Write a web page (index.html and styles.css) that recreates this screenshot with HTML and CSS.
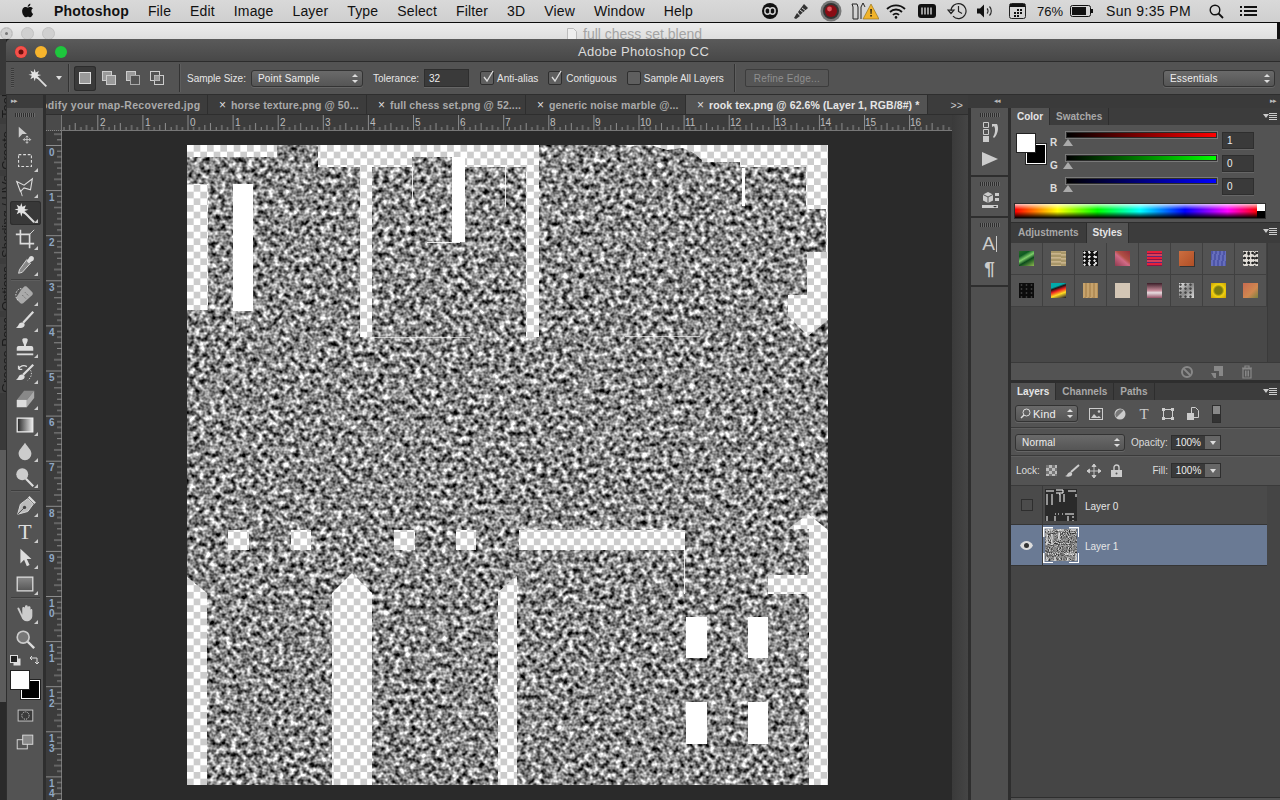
FILE: index.html
```html
<!DOCTYPE html>
<html lang="en">
<head>
<meta charset="utf-8">
<title>Adobe Photoshop CC</title>
<link rel="stylesheet" href="styles.css">
</head>
<body>
<header class="menubar">
  <svg class="apple" viewBox="0 0 14 16"><path d="M11.2 8.5c0-1.9 1.6-2.8 1.6-2.8-.9-1.3-2.2-1.5-2.7-1.5-1.2-.1-2.2.7-2.8.7-.6 0-1.5-.7-2.4-.7-1.3 0-2.4.7-3.1 1.8C.5 8.2 1.4 11.6 2.8 13.4c.6.9 1.3 1.9 2.3 1.9.9 0 1.3-.6 2.4-.6s1.4.6 2.4.6 1.6-.9 2.2-1.8c.7-1 1-2 1-2-.1 0-1.9-.7-1.9-3zM9.4 3c.5-.6.8-1.4.7-2.3-.7 0-1.6.5-2.1 1.1-.5.5-.9 1.4-.8 2.2.8.1 1.7-.4 2.2-1z"/></svg>
  <nav class="menus">
    <span class="app">Photoshop</span><span>File</span><span>Edit</span><span>Image</span><span>Layer</span><span>Type</span><span>Select</span><span>Filter</span><span>3D</span><span>View</span><span>Window</span><span>Help</span>
  </nav>
  <div class="status">
    <svg class="st" width="22" height="16" viewBox="0 0 22 16"><circle cx="11" cy="8" r="8" /><path d="M6 8a2.6 2.6 0 1 1 5 0a2.6 2.6 0 1 0 5 0a2.6 2.6 0 1 0-5 0a2.6 2.6 0 1 1-5 0" fill="none" stroke="#d2d2d2" stroke-width="1.6"/></svg>
    <svg class="st mg10" width="20" height="18" viewBox="0 0 20 18"><path d="M3 16l3-5 3 3-4 3zM7 10l6-8 4 4-8 7z" fill="#333"/><path d="M9 8l5 4M11 6l4 3" stroke="#d2d2d2" stroke-width="1"/></svg>
    <svg class="st mg9" width="22" height="22" viewBox="0 0 22 22"><circle cx="11" cy="11" r="10.5" fill="#777"/><circle cx="11" cy="11" r="8" fill="#333"/><circle cx="11" cy="11" r="6" fill="#8a0c14"/><circle cx="9.5" cy="9" r="2.4" fill="#e0555c"/></svg>
    <svg class="st mg9" width="28" height="20" viewBox="0 0 28 20"><path d="M1 3h5l1 3v12H2V6zM10 18V6l2-4 2 4" fill="none" stroke="#222" stroke-width="1"/><path d="M20 3l8 15H12z" fill="#f0b32b" stroke="#8a6a10" stroke-width=".6"/><path d="M19.3 8h1.5l-.3 5h-.9zM19.3 14h1.5v1.5h-1.5z" fill="#111"/></svg>
    <svg class="st mg7" width="20" height="15" viewBox="0 0 20 15"><path d="M1 5a13 13 0 0 1 18 0M4 8a8.5 8.5 0 0 1 12 0M7 11a4 4 0 0 1 6 0" fill="none" stroke="#111" stroke-width="1.8"/><circle cx="10" cy="13.4" r="1.3"/></svg>
    <svg class="st mg12" width="18" height="14" viewBox="0 0 18 14"><rect width="18" height="14" rx="3"/><path d="M4 3.5v7M7 3.5v7M10 3.5v7M13 3.5v7" stroke="#d2d2d2" stroke-width="1.4"/></svg>
    <svg class="st mg11" width="20" height="18" viewBox="0 0 20 18"><path d="M4 9a7.5 7.5 0 1 1 2 5.2" fill="none" stroke="#222" stroke-width="1.2"/><path d="M1 8h6l-3 3.5zM11.500 4v5.500l3.500 2" fill="none" stroke="#222" stroke-width="1.200"/></svg>
    <svg class="st mg10" width="17" height="14" viewBox="0 0 17 14"><path d="M0 4.500h3l4-4v13l-4-4H0z"/><path d="M10 4.500a3.500 3.500 0 0 1 0 5M12.500 2.500a6.500 6.500 0 0 1 0 9" fill="none" stroke="#222" stroke-width="1.100"/></svg>
    <svg class="st mg15" width="17" height="16" viewBox="0 0 17 16"><rect x=".5" y=".5" width="16" height="15" rx="2" fill="none" stroke="#222"/><rect x="1" y="1" width="15" height="3"/><path d="M8 6h2v2H8zM11 6h2v2h-2zM8 9h2v2H8zM11 9h2v2h-2zM5 9h2v2H5zM8 12h2v2H8zM5 12h2v2H5z"/></svg>
    <span class="pct">76%</span>
    <svg class="st batt" width="23" height="12" viewBox="0 0 23 12"><rect x=".5" y=".5" width="20" height="11" rx="2" fill="none" stroke="#111"/><rect x="2" y="2" width="14" height="8"/><rect x="21" y="4" width="2" height="4"/></svg>
    <span class="clock">Sun 9:35 PM</span>
    <svg class="st srch" width="15" height="15" viewBox="0 0 15 15"><circle cx="6" cy="6" r="4.8" fill="none" stroke="#111" stroke-width="1.400"/><path d="M9.500 9.500L14 14" stroke="#111" stroke-width="1.800"/></svg>
    <svg class="st last" width="17" height="12" viewBox="0 0 17 12"><path d="M0 1h2v2H0zM0 5h2v2H0zM0 9h2v2H0zM4 1h13v2H4zM4 5h13v2H4zM4 9h13v2H4z"/></svg>
  </div>
</header>

<div class="backbar">
  <span class="bdot first"></span><span class="bdot"></span><span class="bdot"></span>
  <span class="btitle"><svg width="10" height="13" viewBox="0 0 10 13"><path d="M.5.500h6l3 3v9h-9z" fill="#eee" stroke="#bbb"/></svg> full chess set.blend</span>
</div>

<div class="desk">
  <aside class="blender">
    <div class="bl-top"></div>
    <div class="bl-tab bl-tools">Tools</div>
    <div class="bl-tab bl-create">Create</div>
    <div class="bl-tab bl-shading">Shading / UVs</div>
    <div class="bl-tab bl-options">Options</div>
    <div class="bl-tab bl-grease">Grease Pencil</div>
    <div class="bl-rest"></div>
  </aside>

  <main class="pswin">
    <div class="titlebar">
      <span class="light red"></span><span class="light yellow"></span><span class="light green"></span>
      <span class="wintitle">Adobe Photoshop CC</span>
    </div>

    <div class="options">
      <span class="grip"></span>
      <svg class="opt-wand" width="20" height="20" viewBox="0 0 24 24"><use href="#i-wand"/></svg>
      <span class="caret"></span>
      <span class="vsep"></span>
      <span class="modes">
        <span class="mode on"><svg width="14" height="14" viewBox="0 0 14 14"><rect x="1.500" y="1.500" width="11" height="11" fill="#999" stroke="#ddd"/></svg></span>
        <span class="mode"><svg width="14" height="14" viewBox="0 0 14 14"><rect x=".5" y=".5" width="9" height="9" fill="#999" stroke="#ccc"/><rect x="4.500" y="4.500" width="9" height="9" fill="#999" stroke="#ccc"/></svg></span>
        <span class="mode"><svg width="14" height="14" viewBox="0 0 14 14"><rect x=".5" y=".5" width="9" height="9" fill="#999" stroke="#ccc"/><rect x="4.500" y="4.500" width="9" height="9" fill="#535353" stroke="#aaa"/></svg></span>
        <span class="mode"><svg width="14" height="14" viewBox="0 0 14 14"><rect x=".5" y=".5" width="9" height="9" fill="none" stroke="#ccc"/><rect x="4.500" y="4.500" width="9" height="9" fill="none" stroke="#ccc"/><rect x="4.500" y="4.500" width="5" height="5" fill="#999"/></svg></span>
      </span>
      <span class="vsep second"></span>
      <span class="lbl sample-lbl">Sample Size:</span>
      <span class="select sample-sel">Point Sample<span class="updown"></span></span>
      <span class="lbl tol-lbl">Tolerance:</span>
      <span class="input tol-in">32</span>
      <span class="check aa"><svg width="14" height="14" viewBox="0 0 14 14"><path d="M3 7l3 4 6-10" fill="none" stroke="#ddd" stroke-width="1.300"/></svg></span><span class="lbl">Anti-alias</span>
      <span class="check cg"><svg width="14" height="14" viewBox="0 0 14 14"><path d="M3 7l3 4 6-10" fill="none" stroke="#ddd" stroke-width="1.300"/></svg></span><span class="lbl">Contiguous</span>
      <span class="check sl"></span><span class="lbl">Sample All Layers</span>
      <span class="vsep third"></span>
      <span class="btn-dis">Refine Edge...</span>
      <span class="select workspace">Essentials<span class="updown"></span></span>
    </div>

    <div class="work">
      <aside class="tools">
        <div class="tools-head"><span class="tw">▸▸</span></div>
        <div class="grip-h"></div>
        <div class="tool f"><svg viewBox="0 0 24 24"><path d="M3 3l9 8H8l-1 0-4 4z" fill="#ccc"/><path d="M12 13v8M8 17h8M12 13l-1.500 1.500M12 13l1.500 1.500M12 21l-1.500-1.500M12 21l1.500-1.500M8 17l1.500-1.500M8 17l1.500 1.500M16 17l-1.500-1.500M16 17l-1.500 1.500" stroke="#ccc" fill="none"/></svg></div>
        <div class="tool m"><svg viewBox="0 0 24 24"><rect x="5" y="5" width="14" height="13" fill="none" stroke="#ddd" stroke-width="1.200" stroke-dasharray="3 2"/></svg></div>
        <div class="tool m"><svg viewBox="0 0 24 24"><path d="M3 6l8 4 9-7-2 12-7-2-4 4z" fill="none" stroke="#ddd" stroke-width="1.200"/><path d="M7 15l2 7" stroke="#ddd"/></svg></div>
        <div class="tool m on"><svg viewBox="0 0 24 24"><use href="#i-wand"/></svg></div>
        <div class="tool m"><svg viewBox="0 0 24 24"><path d="M7 2v15h15M2 7h15v15" fill="none" stroke="#ddd" stroke-width="1.800"/><path d="M17 7l5-5" stroke="#ddd"/></svg></div>
        <div class="tool m"><svg viewBox="0 0 24 24"><path d="M14 6l4 4-9 10-4 1 1-4z" fill="#888" stroke="#ddd"/><path d="M14 8l3-5c1-1 3-1 4 0s1 3 0 4l-5 3z" fill="#ddd"/></svg></div>
        <div class="sep sep-a"></div>
        <div class="tool m"><svg viewBox="0 0 24 24"><path d="M8 6l3-3c1-.7 2-.7 3 0l6 6c.7 1 .7 2 0 3L10 21c-1 .7-2 .7-3 0l-4-4c-.7-1-.7-2 0-3z" fill="#aaa"/><path d="M8 5C4 5 2 9 2 12s1 5 3 6" fill="none" stroke="#ddd" stroke-dasharray="1.500 1.500"/><path d="M9 12l4 4M12 9l4 4" stroke="#666" stroke-dasharray="1.500 1"/></svg></div>
        <div class="tool m"><svg viewBox="0 0 24 24"><path d="M21 2L10 14" stroke="#ddd" stroke-width="2.400"/><path d="M10 14c-2-1-4 0-5 2-1 2-2 3-3 3 3 1 7 1 9-1 1-1 1-3-1-4z" fill="#ddd"/></svg></div>
        <div class="tool m"><svg viewBox="0 0 24 24"><path d="M9 4c0-2 6-2 6 0 0 3-2 4-2 7h6c1 0 2 1 2 2v3H3v-3c0-1 1-2 2-2h6c0-3-2-4-2-7z" fill="#ddd"/><path d="M3 20h18" stroke="#ddd" stroke-width="2"/></svg></div>
        <div class="tool m"><svg viewBox="0 0 24 24"><path d="M21 3L10 14" stroke="#ddd" stroke-width="2.400"/><path d="M10 14c-2-1-4 0-5 2-1 2-2 3-3 3 3 1 7 1 9-1 1-1 1-3-1-4z" fill="#ddd"/><path d="M5 8a6 6 0 0 1 9-3M5 8V4M5 8h4" fill="none" stroke="#ddd" stroke-width="1.500"/><path d="M18 9c2 3 1 8-3 11" fill="none" stroke="#ddd" stroke-dasharray="1.500 1.500"/></svg></div>
        <div class="tool m"><svg viewBox="0 0 24 24"><path d="M11 3h11l-8 10H3z" fill="#888"/><path d="M3 13h11v8H3z" fill="#ddd"/><path d="M14 13l8-10v8l-8 10z" fill="#aaa"/></svg></div>
        <div class="tool m"><svg viewBox="0 0 24 24"><defs><linearGradient id="gt"><stop offset="0" stop-color="#222"/><stop offset="1" stop-color="#eee"/></linearGradient></defs><rect x="3.500" y="4.500" width="17" height="15" fill="url(#gt)" stroke="#eee" stroke-width="1.400"/></svg></div>
        <div class="tool m"><svg viewBox="0 0 24 24"><path d="M12 3c4 6 7 8 7 12a7 7 0 0 1-14 0c0-4 3-6 7-12z" fill="#ccc"/></svg></div>
        <div class="tool m"><svg viewBox="0 0 24 24"><circle cx="9" cy="9" r="6.500" fill="#ccc"/><path d="M13 14l8 8" stroke="#ddd" stroke-width="2.400"/></svg></div>
        <div class="sep"></div>
        <div class="tool m"><svg viewBox="0 0 24 24"><path d="M15 4l6 6-6 8-11 3 3-11z" fill="#bbb" stroke="#ddd"/><path d="M4 21l7-7" stroke="#444"/><circle cx="11.500" cy="13.500" r="1.800" fill="#444"/><path d="M16 2l7 7" stroke="#ddd" stroke-width="2.500"/></svg></div>
        <div class="tool m"><span class="tool-t">T</span></div>
        <div class="tool m"><svg viewBox="0 0 24 24"><path d="M7 2v16l4-4 3 7 3-1.500-3-6.500h5z" fill="#ddd"/></svg></div>
        <div class="tool m"><svg viewBox="0 0 24 24"><defs><linearGradient id="gr" x2="0" y2="1"><stop offset="0" stop-color="#888"/><stop offset="1" stop-color="#555"/></linearGradient></defs><rect x="3.500" y="4.500" width="17" height="15" fill="url(#gr)" stroke="#ddd" stroke-width="1.400"/></svg></div>
        <div class="sep"></div>
        <div class="tool m"><svg viewBox="0 0 24 24"><path d="M4 8l4 8c1 3 3 5 6 5s6-2 6-6V9c0-2-2-2-2 0v3V6c0-2-3-2-3 0v5V5c0-2-3-2-3 0v6V7c0-2-3-2-3 0v7L6 7c-1-2-3-1-2 1z" fill="#ccc"/></svg></div>
        <div class="tool"><svg viewBox="0 0 24 24"><circle cx="10" cy="10" r="6.500" fill="#777" stroke="#ccc" stroke-width="1.800"/><path d="M15 15l7 7" stroke="#ddd" stroke-width="2.600"/></svg></div>
        <div class="mini">
          <svg width="11" height="11" viewBox="0 0 11 11"><rect x="3.500" y="3.500" width="7" height="7" fill="#ddd"/><rect x=".5" y=".5" width="7" height="7" fill="#222" stroke="#ddd"/></svg>
          <svg width="11" height="11" viewBox="0 0 11 11"><path d="M1 3h7v6M1 3l2-2M1 3l2 2M8 9L6 7M8 9l2-2" fill="none" stroke="#ddd"/></svg>
        </div>
        <div class="swatches"><span class="bgc"></span><span class="fgc"></span></div>
        <div class="tool"><svg viewBox="0 0 24 24"><rect x="4.500" y="5.500" width="16" height="12" fill="#3a3a3a" stroke="#ccc"/><circle cx="12.500" cy="11.500" r="4" fill="none" stroke="#eee" stroke-dasharray="1 1.200"/></svg></div>
        <div class="tool"><svg viewBox="0 0 24 24"><rect x="3.500" y="9.500" width="11" height="10" fill="#555" stroke="#ddd"/><rect x="9.500" y="4.500" width="11" height="10" fill="#888" stroke="#ddd"/></svg></div>
      </aside>

      <section class="doc">
        <div class="tabs">
          <div class="tab first"><span class="clip">odify your map-Recovered.jpg</span></div>
          <div class="tab w2"><i>×</i>horse texture.png @ 50...</div>
          <div class="tab w2"><i>×</i>full chess set.png @ 52....</div>
          <div class="tab w3"><i>×</i>generic noise marble @...</div>
          <div class="tab active"><i>×</i>rook tex.png @ 62.6% (Layer 1, RGB/8#) *</div>
          <div class="more">&gt;&gt;</div>
        </div>
        <div class="docbody">
          <div class="rulers-v">
            <div class="corner"></div>
            <svg class="vruler" width="16" height="669" viewBox="0 131 16 669">
              <defs>
                <pattern id="vt" patternUnits="userSpaceOnUse" x="0" y="145" width="16" height="45.100">
                  <path d="M0 .5H16M11 6.100h5M11 11.800h5M8 17.400h8M11 23h5M11 28.700h5M8 34.300h8M11 40h5" stroke="#8d8d8d" fill="none"/>
                </pattern>
              </defs>
              <rect y="131" width="16" height="669" fill="url(#vt)"/>
              <g class="rl">
                <text x="3" y="156">0</text><text x="3" y="201">1</text><text x="3" y="246">2</text><text x="3" y="291">3</text><text x="3" y="336">4</text><text x="3" y="381">5</text><text x="3" y="426">6</text><text x="3" y="471">7</text><text x="3" y="517">8</text><text x="3" y="562">9</text>
                <text x="3" y="607">1</text><text x="3" y="617">0</text><text x="3" y="652">1</text><text x="3" y="662">1</text><text x="3" y="697">1</text><text x="3" y="707">2</text><text x="3" y="742">1</text><text x="3" y="752">3</text><text x="3" y="787">1</text><text x="3" y="797">4</text>
              </g>
            </svg>
          </div>
          <div class="docright">
            <svg class="hruler" width="890" height="16" viewBox="62 0 890 16">
              <defs>
                <pattern id="ht" patternUnits="userSpaceOnUse" x="187.500" y="0" width="45.100" height="16">
                  <path d="M.5 0V16M6.100 12v4M11.800 12v4M17.400 10v6M23 8v8M28.700 12v4M34.300 10v6M40 12v4" stroke="#8d8d8d" fill="none"/>
                </pattern>
              </defs>
              <rect x="62" width="890" height="15" fill="url(#ht)"/>
              <path d="M62 15.500H952" stroke="#777"/>
              <g class="rh">
                <text x="100" y="10">2</text><text x="145" y="10">1</text><text x="190" y="10">0</text><text x="235" y="10">1</text><text x="280" y="10">2</text><text x="325" y="10">3</text><text x="370" y="10">4</text><text x="415" y="10">5</text><text x="460" y="10">6</text><text x="505" y="10">7</text><text x="550" y="10">8</text><text x="595" y="10">9</text><text x="640" y="10">10</text><text x="685" y="10">11</text><text x="730" y="10">12</text><text x="775" y="10">13</text><text x="820" y="10">14</text><text x="865" y="10">15</text><text x="910" y="10">16</text>
              </g>
            </svg>
            <div class="stage">
              <svg class="canvas" width="641" height="640" viewBox="187 145 641 640">
                <defs>
                  <filter id="noise" x="0" y="0" width="100%" height="100%" color-interpolation-filters="sRGB">
                    <feTurbulence type="fractalNoise" baseFrequency="0.19" numOctaves="2" seed="7"/>
                    <feColorMatrix type="matrix" values="1.800 0 0 0 -.36  1.800 0 0 0 -.36  1.800 0 0 0 -.36  0 0 0 0 1"/>
                    <feGaussianBlur stdDeviation="0.6"/>
                  </filter>
                  <pattern id="chk" patternUnits="userSpaceOnUse" x="187" y="145" width="13.340" height="13.340">
                    <rect width="13.340" height="13.340" fill="#fff"/>
                    <rect x="6.670" width="6.670" height="6.670" fill="#ccc"/>
                    <rect y="6.670" width="6.670" height="6.670" fill="#ccc"/>
                  </pattern>
                </defs>
                <rect x="187" y="145" width="641" height="640" filter="url(#noise)"/>
                <g fill="url(#chk)">
                  <path d="M187 145H277V157H187Z"/>
                  <path d="M187 184H208V310H187Z"/>
                  <path d="M318 145H539V337H526V167H465V242H452V157H412V167H372V337H360V167H318Z"/>
                  <path d="M622 145H640L630 147Z"/>
                  <path d="M650 145H702V160L694 153 683 148 667 150Z"/>
                  <path d="M702 145H828V209H806V167H740V162H702Z"/>
                  <path d="M826 209H828V252H826Z"/>
                  <path d="M807 252H828V320L808 336 788 316V295H807Z"/>
                  <path d="M228 530H249V550H228ZM291 530H311V550H291ZM394 530H415V550H394ZM456 530H476V550H456Z"/>
                  <path d="M519 530H685V550H519Z"/>
                  <path d="M187 577L207 593V785H187Z"/>
                  <path d="M352 573L372 593V785H332V593Z"/>
                  <path d="M517 576V785H498V592Z"/>
                  <path d="M808 514L828 530V785H809V594H768V575H809V529H788Z"/>
                </g>
                <g fill="#fff">
                  <path d="M233 184H253V311H233Z"/>
                  <path d="M686 617H707V658H686ZM748 617H768V658H748ZM686 702H707V744H686ZM748 702H768V744H748Z"/>
                  <path d="M452 157H465V242H452Z"/>
                  <path d="M742 168H745V206H742Z"/>
                </g>
                <g stroke="#fff" fill="none" opacity=".85">
                  <path d="M412.500 167V205M505.500 167V207M427 242.500H460M684.500 550V594M234 311V336"/>
                  <path d="M372 337.500H470M625 336.500H700" opacity=".7"/>
                </g>
              </svg>
            </div>
          </div>
          <div class="vscroll"></div>
        </div>
      </section>

      <aside class="rightside">
        <div class="rs-head">
          <span class="rs-a">◂◂</span><span class="rs-b">▸▸</span>
        </div>
        <div class="rs-body">
          <div class="dock">
            <div class="dgroup g1"><div class="grip-h"></div>
              <svg width="24" height="22" viewBox="0 0 24 22"><path d="M5.500 1.500h5v5h-5zM5.500 8.500h5v5h-5z" fill="none" stroke="#ccc"/><path d="M5 15h6v6H5z" fill="#ccc"/><path d="M14 3h5c2 4 1 10-3 14l-1-1c2-3 3-8 1-11l-2 1z" fill="#ccc"/></svg>
              <svg class="play" width="18" height="16" viewBox="0 0 18 16"><path d="M1 1l16 7-16 7z" fill="#ccc"/></svg>
            </div>
            <div class="dgroup g2"><div class="grip-h"></div>
              <svg width="24" height="22" viewBox="0 0 24 22"><path d="M10 1l5 2.500v6L10 12 5 9.500v-6z" fill="#ccc"/><path d="M5 3.500L10 6l5-2.500M10 6v6" stroke="#555" fill="none"/><path d="M17 2h4v3h-4zM17 7h4v3h-4z" fill="#ccc"/><path d="M4 14h16v3H4z" fill="#ccc"/><path d="M15 15h4l-2 1.500z" fill="#333"/></svg>
            </div>
            <div class="dgroup g3"><div class="grip-h"></div>
              <span class="dock-a">A<b></b></span>
              <span class="dock-p">¶</span>
            </div>
          </div>
          <div class="panels">
            <section class="color">
              <div class="ptabs"><span class="ptab on">Color</span><span class="ptab">Swatches</span><span class="pmenu"></span></div>
              <div class="color-body">
                <div class="cswatch"><span class="bgc"></span><span class="fgc"></span></div>
                <div class="csliders">
                  <div class="crow"><span class="ch">R</span><span class="track tr-r"><em></em></span><span class="cval">1</span></div>
                  <div class="crow"><span class="ch">G</span><span class="track tr-g"><em></em></span><span class="cval">0</span></div>
                  <div class="crow"><span class="ch">B</span><span class="track tr-b"><em></em></span><span class="cval">0</span></div>
                </div>
                <div class="spectrum"><span></span></div>
              </div>
            </section>
            <section class="styles">
              <div class="ptabs"><span class="ptab adj">Adjustments</span><span class="ptab on">Styles</span><span class="pmenu"></span></div>
              <div class="styles-body">
                <div class="sgrid">
                  <span><i class="s1"></i></span><span><i class="s2"></i></span><span><i class="s3"></i></span><span><i class="s4"></i></span><span><i class="s5"></i></span><span><i class="s6"></i></span><span><i class="s7"></i></span><span><i class="s8"></i></span>
                  <span><i class="s9"></i></span><span><i class="s10"></i></span><span><i class="s11"></i></span><span><i class="s12"></i></span><span><i class="s13"></i></span><span><i class="s14"></i></span><span><i class="s15"></i></span><span><i class="s16"></i></span>
                </div>
                <div class="sside"></div>
              </div>
              <div class="sfoot">
                <svg width="14" height="14" viewBox="0 0 14 14"><circle cx="7" cy="7" r="5" fill="none" stroke="#888" stroke-width="2"/><path d="M3.500 3.500l7 7" stroke="#888" stroke-width="2"/></svg>
                <svg width="14" height="14" viewBox="0 0 14 14"><path d="M4 1h9v10H9V6H4zM1 8h5v5H4z" fill="#888"/></svg>
                <svg width="14" height="14" viewBox="0 0 14 14"><path d="M2 3h10M5 3V1h4v2M3 4h8v9H3z" fill="none" stroke="#888" stroke-width="1.200"/><path d="M5.500 5.500v6M7 5.500v6M8.500 5.500v6" stroke="#888"/></svg>
              </div>
            </section>
            <section class="layers">
              <div class="ptabs"><span class="ptab on">Layers</span><span class="ptab">Channels</span><span class="ptab">Paths</span><span class="pmenu"></span></div>
              <div class="lrow filter">
                <span class="select kind"><svg width="11" height="11" viewBox="0 0 11 11"><circle cx="6.500" cy="4.500" r="3.500" fill="none" stroke="#ddd"/><path d="M4 7l-3 3" stroke="#ddd" stroke-width="1.500"/></svg>Kind<span class="updown"></span></span>
                <svg class="fi f-first" width="14" height="12" viewBox="0 0 14 12"><rect x=".5" y=".5" width="13" height="11" fill="none" stroke="#ccc"/><path d="M2 10l3-4 3 3 2-1 2 2z" fill="#ccc"/><circle cx="10" cy="3.500" r="1.300" fill="#ccc"/></svg>
                <svg class="fi f-second" width="12" height="12" viewBox="0 0 12 12"><circle cx="6" cy="6" r="5.500" fill="#ccc"/><path d="M9.500 2.500L2.500 9.500A5 5 0 0 1 9.500 2.500z" fill="#777"/></svg>
                <span class="fi ftext">T</span>
                <svg class="fi" width="12" height="12" viewBox="0 0 12 12"><rect x="1.500" y="1.500" width="9" height="9" fill="none" stroke="#ccc"/><path d="M0 0h3v3H0zM9 0h3v3H9zM0 9h3v3H0zM9 9h3v3H9z" fill="#ccc"/></svg>
                <svg class="fi f-last" width="12" height="13" viewBox="0 0 12 13"><path d="M4.500 .5h4l3 3v7h-7z" fill="none" stroke="#ccc"/><rect y="6" width="7" height="7" fill="#ccc"/></svg>
                <span class="toggle"></span>
              </div>
              <div class="lrow blend">
                <span class="select normal">Normal<span class="updown"></span></span>
                <span class="lbl op">Opacity:</span>
                <span class="pinput"><b>100%</b><u></u></span>
              </div>
              <div class="lrow lock">
                <span class="lbl">Lock:</span>
                <svg class="lk lk1" width="11" height="11" viewBox="0 0 11 11"><rect width="11" height="11" fill="#bbb"/><path d="M0 0h3v3H0zM6 0h3v3H6zM3 3h3v3H3zM9 3h2v3H9zM0 6h3v3H0zM6 6h3v3H6zM3 9h3v2H3zM9 9h2v2H9z" fill="#777"/></svg>
                <svg class="lk" width="16" height="14" viewBox="0 0 16 14"><path d="M15 1L7 8" stroke="#ccc" stroke-width="2"/><path d="M6.500 8C5 8 4 9 3.500 10 3 11 2 12 1 12c2 1 6 1 7-1 .5-1 0-2.500-1.500-3z" fill="#ccc"/></svg>
                <svg class="lk" width="14" height="14" viewBox="0 0 14 14"><path d="M7 0v14M0 7h14M7 0L5 2.500h4zM7 14l-2-2.500h4zM0 7l2.500-2v4zM14 7l-2.500-2v4z" fill="#ccc" stroke="#ccc" stroke-width=".9"/></svg>
                <svg class="lk lk4" width="11" height="13" viewBox="0 0 11 13"><path d="M3 6V3.500a2.500 2.500 0 0 1 5 0V6" fill="none" stroke="#ccc" stroke-width="1.400"/><rect y="6" width="11" height="7" fill="#ccc"/><circle cx="5.500" cy="9.500" r="1" fill="#555"/></svg>
                <span class="lbl fl">Fill:</span>
                <span class="pinput"><b>100%</b><u></u></span>
              </div>
              <div class="llist">
                <div class="layer l0">
                  <span class="lvis"><span class="vbox"></span></span>
                  <span class="lth">
                    <svg width="32" height="32" viewBox="0 0 32 32"><rect width="32" height="32" fill="#2a2a2a"/><path d="M1 2h8M11 1h7v3h-7M23 2h8M2 5v11M7 5v11M14 5h1v8M19 5v8M31 5v3M10 25h1M13 25h1M17 25h1M20 25h9M2 27v5M10 27v5M23 27v5M28 27v2M28 31v1" stroke="#fff" fill="none"/></svg>
                  </span>
                  <span class="lname">Layer 0</span>
                </div>
                <div class="layer l1">
                  <span class="lvis"><svg width="13" height="9" viewBox="0 0 13 9"><path d="M0 4.500C2 1 4 0 6.500 0S11 1 13 4.500C11 8 9 9 6.500 9S2 8 0 4.500z" fill="#ddd"/><circle cx="6.500" cy="4.500" r="2.500" fill="#333"/></svg></span>
                  <span class="lth sel">
                    <svg width="32" height="32" viewBox="0 0 32 32">
                      <defs><filter id="nt" x="0" y="0" width="100%" height="100%" color-interpolation-filters="sRGB"><feTurbulence type="fractalNoise" baseFrequency="0.9" numOctaves="1" seed="3"/><feColorMatrix type="matrix" values="1.400 0 0 0 -.2  1.400 0 0 0 -.2  1.400 0 0 0 -.2  0 0 0 0 1"/></filter></defs>
                      <rect width="32" height="32" filter="url(#nt)"/>
                      <path d="M1 1h7M12 1h7M26 1h5M2 5v11M7 5v11M14 3v8M10 25h1M20 25h9M2 28v4M10 28v4M23 28v4M31 25v7" stroke="#fff" fill="none"/>
                    </svg>
                  </span>
                  <span class="lname">Layer 1</span>
                </div>
                <div class="lempty"></div>
              </div>
              <div class="lfoot"></div>
            </section>
          </div>
        </div>
      </aside>
    </div>
  </main>
</div>

<svg class="defs" width="0" height="0" aria-hidden="true"><defs>
  <g id="i-wand"><path d="M11 11l11 11" stroke="#ddd" stroke-width="2.200"/><path d="M8 1l1.200 4.300L13 3.500l-1.500 4 4.300 1-4.300 1.400 1.500 4-3.800-2L8 16l-1.300-4.600-3.800 2 1.700-4-4-1.300 4-1-1.700-4 3.800 1.900z" fill="#e4e4e4"/></g>
</defs></svg>
</body>
</html>
```
FILE: styles.css
```css
* { box-sizing: border-box; }
html, body { margin: 0; padding: 0; }
body { width: 1280px; height: 800px; overflow: hidden; background: #222; font-family: "Liberation Sans", Arial, sans-serif; display: flex; flex-direction: column; position: relative; }
.defs { position: absolute; }

/* menu bar */
.menubar { height: 23px; flex: none; display: flex; align-items: center; background: linear-gradient(#d9d9d9, #cfcfcf); border-bottom: 1px solid #0c0c0c; padding-left: 21px; font-size: 14px; color: #111; }
.apple { width: 13px; height: 15px; fill: #111; margin-top: -2px; }
.menus { display: flex; gap: 19px; margin-left: 20px; letter-spacing: .15px; }
.menus .app { font-weight: 700; letter-spacing: .2px; }
.status { margin-left: auto; display: flex; align-items: center; padding-right: 23px; }
.st { display: block; flex: none; fill: #111; }
.mg7 { margin-left: 7px; }
.mg9 { margin-left: 9px; }
.mg10 { margin-left: 10px; }
.mg11 { margin-left: 11px; }
.mg12 { margin-left: 12px; }
.mg15 { margin-left: 15px; }
.pct { font-size: 13px; margin-left: 11px; }
.batt { margin-left: 7px; }
.clock { margin-left: 13px; letter-spacing: .37px; }
.srch { margin-left: 18px; }
.last { margin-left: 16px; }

/* window behind */
.backbar { height: 16px; flex: none; display: flex; align-items: center; padding-top: 4px; gap: 8px; background: linear-gradient(#ececec, #dedede); border-right: 3px solid #111; position: relative; overflow: hidden; }
.bdot { width: 13px; height: 13px; flex: none; border-radius: 50%; background: #d0d0d0; border: 1px solid #c2c2c2; }
.bdot.first { margin-left: 0; box-shadow: inset 0 0 0 4px #d0d0d0, inset 0 0 0 6px #777; }
.btitle { position: absolute; left: 567px; top: 3px; font-size: 14px; line-height: 16px; color: #a4a4a4; display: flex; gap: 6px; align-items: center; }

.desk { flex: 1; display: flex; min-height: 0; }

/* blender sliver */
.blender { width: 6px; flex: none; display: flex; flex-direction: column; background: #3c3c3c; overflow: hidden; }
.bl-top { height: 56px; background: #383838; }
.bl-tab { flex: none; writing-mode: vertical-rl; transform: rotate(180deg); font-size: 13px; line-height: 13px; color: #1c1c1c; background: #424242; text-align: center; display: flex; justify-content: flex-start; white-space: nowrap; margin-bottom: 6px; overflow: hidden; }
.bl-tools { height: 23px; }
.bl-create { height: 46px; }
.bl-shading { height: 82px; }
.bl-options { height: 47px; }
.bl-grease { height: 76px; margin-bottom: 0; }
.bl-rest { flex: 1; background: linear-gradient(#3a3a3a 0, #3a3a3a 14%, #5c5c5c 14%, #5c5c5c 76%, #2a2a2a 76%); }

/* photoshop window */
.pswin { flex: 1; min-width: 0; display: flex; flex-direction: column; background: #3a3a3a; border-top-left-radius: 5px; overflow: hidden; }
.titlebar { height: 23px; flex: none; display: flex; align-items: center; padding: 3px 0 0 9px; gap: 8px; background: linear-gradient(#5a5a5a, #484848); border-bottom: 1px solid #2c2c2c; position: relative; }
.light { width: 12px; height: 12px; border-radius: 50%; }
.red { background: #f4514b; box-shadow: inset 0 0 0 3.500px #f4514b, inset 0 0 0 6px #6b0f0c; }
.yellow { background: #f7b42c; }
.green { background: #1ec63d; }
.wintitle { position: absolute; left: 1px; right: 0; top: 2px; text-align: center; font-size: 13px; color: #dcdcdc; letter-spacing: .3px; line-height: 22px; }

.options { height: 33px; flex: none; display: flex; align-items: center; background: #535353; border-bottom: 1px solid #2e2e2e; font-size: 10px; color: #e6e6e6; }
.grip { width: 3px; height: 20px; margin-left: 5px; background: repeating-linear-gradient(#3a3a3a 0 1px, #5d5d5d 1px 2px); }
.opt-wand { margin-left: 14px; }
.caret { width: 0; height: 0; border: 3px solid transparent; border-top: 4px solid #ddd; margin: 3px 0 0 8px; }
.vsep { width: 1px; height: 28px; background: #333; box-shadow: 1px 0 0 #5e5e5e; margin-left: 6px; }
.modes { display: flex; align-items: center; gap: 2px; margin-left: 5px; }
.mode { width: 22px; height: 25px; display: flex; align-items: center; justify-content: center; border-radius: 3px; }
.mode.on { width: 22px; background: #3a3a3a; box-shadow: inset 0 0 0 1px #2c2c2c; }
.vsep.second { margin-left: 11px; }
.lbl { white-space: nowrap; }
.sample-lbl { margin-left: 7px; }
.select { display: flex; align-items: center; position: relative; height: 17px; border-radius: 3px; background: linear-gradient(#6a6a6a, #555); border: 1px solid #333; box-shadow: 0 1px 0 #666; padding-left: 6px; font-size: 10px; color: #eee; letter-spacing: .2px; }
.updown { position: absolute; right: 4px; top: 3px; width: 6px; height: 9px; }
.updown::before, .updown::after { content: ""; position: absolute; left: 0; border: 3px solid transparent; }
.updown::before { top: -3px; border-bottom: 3px solid #ddd; }
.updown::after { bottom: -3px; border-top: 3px solid #ddd; }
.sample-sel { width: 112px; margin-left: 5px; }
.tol-lbl { margin-left: 10px; }
.input { display: flex; align-items: center; height: 18px; background: #3a3a3a; border: 1px solid #2e2e2e; box-shadow: 0 1px 0 #666; padding-left: 4px; color: #eee; }
.tol-in { width: 45px; margin-left: 5px; }
.check { width: 14px; height: 14px; display: block; flex: none; background: #5f5f5f; border: 1px solid #2e2e2e; border-radius: 2px; margin-right: 3px; }
.check svg { display: block; margin: -2px 0 0 0; }
.aa { margin-left: 11px; }
.cg { margin-left: 10px; margin-right: 4px; }
.sl { margin-left: 10px; margin-right: 3px; }
.vsep.third { margin-left: 10px; }
.btn-dis { width: 84px; height: 18px; margin-left: 10px; display: flex; align-items: center; justify-content: center; background: #565656; border: 1px solid #3c3c3c; border-radius: 2px; color: #8f8f8f; letter-spacing: .2px; }
.workspace { width: 112px; margin-left: auto; margin-right: 5px; }

.work { flex: 1; min-height: 0; display: flex; background: #2e2e2e; }

/* tools */
.tools { width: 37px; flex: none; margin-left: 1px; background: #535353; border-right: 1px solid #2e2e2e; display: flex; flex-direction: column; align-items: center; }
.tools-head { width: 100%; height: 13px; background: #3c3c3c; color: #bbb; font-size: 7px; line-height: 12px; padding-left: 4px; letter-spacing: -1px; }
.grip-h { width: 20px; height: 4px; margin: 5px auto 0; flex: none; background: repeating-linear-gradient(90deg, #2e2e2e 0 1px, #6a6a6a 1px 2px); }
.tools > .grip-h { margin-bottom: 5px; }
.tool { width: 31px; height: 26px; flex: none; display: flex; align-items: center; justify-content: center; position: relative; border-radius: 3px; }
.tool svg { width: 22px; height: 22px; display: block; }
.tool.m::after { content: ""; position: absolute; right: 3px; bottom: 2px; border: 2px solid transparent; border-right-color: #ccc; border-bottom-color: #ccc; }
.tool.f svg { margin-left: 4px; }
.tool.on { background: #383838; box-shadow: inset 0 0 0 1px #2d2d2d; height: 24px; margin: 1px 0; }
.sep { width: 29px; height: 3px; flex: none; border-top: 1px solid #3e3e3e; box-shadow: inset 0 1px 0 #5e5e5e; }
.sep-a { margin-top: 1px; }
.tool-t { font-family: "Liberation Serif", serif; font-size: 22px; color: #ddd; line-height: 22px; }
.mini { width: 30px; height: 14px; flex: none; display: flex; justify-content: space-between; align-items: center; margin-top: 1px; }
.swatches { width: 32px; height: 32px; flex: none; position: relative; margin-top: 3px; margin-bottom: 1px; }
.fgc, .bgc { position: absolute; display: block; }
.fgc { left: 1px; top: 0; width: 20px; height: 20px; background: #fff; border: 1px solid #222; }
.bgc { left: 12px; top: 10px; width: 19px; height: 19px; background: #000; border: 1px solid #fff; outline: 1px solid #222; }

/* document */
.doc { width: 922px; flex: none; display: flex; flex-direction: column; margin-left: 2px; }
.tabs { height: 20px; flex: none; display: flex; background: #3c3c3c; border-bottom: 1px solid #2e2e2e; font-size: 10.5px; font-weight: 700; color: #aaa; letter-spacing: .1px; line-height: 21px; }
.tab { flex: none; white-space: nowrap; overflow: hidden; border-right: 1px solid #2e2e2e; padding-left: 11px; }
.tab i { font-style: normal; margin-right: 5px; color: #ddd; font-weight: 400; font-size: 12px; }
.tab.first { width: 162px; padding-left: 0; position: relative; }
.tab.first .clip { display: block; margin-left: -5px; letter-spacing: .3px; }
.tab.w2 { width: 159px; }
.tab.w3 { width: 160px; }
.tab.active { width: 242px; background: #535353; color: #e6e6e6; }
.more { flex: 1; text-align: right; padding-right: 5px; color: #ccc; font-weight: 400; }
.docbody { flex: 1; min-height: 0; display: flex; }
.rulers-v { width: 16px; flex: none; display: flex; flex-direction: column; background: #3c3c3c; border-right: 1px solid #777; }
.corner { height: 16px; background: #4a4a4a; border-bottom: 1px dotted #888; }
.vruler, .hruler { display: block; flex: none; }
.rl text { font-size: 10px; fill: #8fa7c4; font-weight: 700; font-family: "Liberation Sans", sans-serif; }
.rh text { font-size: 10px; fill: #bcbcbc; font-family: "Liberation Sans", sans-serif; transform: translateY(1px); }
.docright { width: 890px; flex: none; display: flex; flex-direction: column; background: #3c3c3c; }
.stage { flex: 1; min-height: 0; background: #2a2a2a; padding: 14px 0 0 125px; overflow: hidden; }
.canvas { display: block; }
.vscroll { width: 16px; flex: none; background: linear-gradient(90deg, #3a3a3a, #454545); }

/* right side */
.rightside { flex: 1; min-width: 0; display: flex; flex-direction: column; margin-left: 3px; }
.rs-head { height: 13px; flex: none; display: flex; justify-content: space-between; background: #3a3a3a; color: #bbb; font-size: 7px; line-height: 12px; letter-spacing: -1px; padding: 0 4px 0 26px; margin-left: -3px; }
.rs-body { flex: 1; min-height: 0; display: flex; }
.dock { width: 37px; flex: none; display: flex; flex-direction: column; background: #4f4f4f; }
.dgroup { flex: none; display: flex; flex-direction: column; align-items: center; border-bottom: 2px solid #2e2e2e; background: #535353; }
.g1 { height: 69px; gap: 4px; }
.g2 { height: 41px; gap: 5px; }
.g3 { height: 69px; gap: 4px; }
.play { margin-top: 4px; }
.dock-a { font-size: 19px; color: #ccc; line-height: 20px; margin-top: 3px; display: flex; }
.dock-a b { width: 1px; height: 16px; background: #ccc; margin: 2px 0 0 1px; }
.dock-p { font-size: 19px; color: #ccc; font-weight: 700; line-height: 22px; }
.panels { flex: 1; min-width: 0; margin-left: 3px; display: flex; flex-direction: column; background: #2e2e2e; }
.ptabs { height: 17px; flex: none; display: flex; background: #3c3c3c; font-size: 10px; font-weight: 700; color: #a8a8a8; line-height: 18px; position: relative; }
.ptab { padding: 0 6px; border-right: 1px solid #2e2e2e; }
.ptab.on { background: #535353; color: #e6e6e6; }
.ptab.adj { padding: 0 7px; }
.pmenu { position: absolute; right: 3px; top: 5px; width: 8px; height: 7px; background: repeating-linear-gradient(#ccc 0 1px, transparent 1px 2px); }
.pmenu::before { content: ""; position: absolute; left: -6px; top: 1px; border: 3px solid transparent; border-top: 4px solid #ccc; }

.color-body { height: 97px; background: #535353; display: flex; flex-wrap: wrap; align-content: flex-start; font-size: 11px; color: #ddd; padding: 8px 0 0 4px; }
.cswatch { width: 32px; height: 32px; position: relative; margin-left: 1px; }
.cswatch .fgc { left: 0; top: 0; width: 20px; height: 20px; }
.cswatch .bgc { left: 10px; top: 11px; width: 20px; height: 20px; }
.csliders { width: 218px; margin-left: 2px; display: flex; flex-direction: column; gap: 6px; margin-top: -1px; }
.crow { height: 17px; display: flex; position: relative; }
.ch { width: 16px; font-weight: 700; font-size: 10px; color: #ddd; padding-top: 5px; }
.track { width: 151px; height: 6px; display: block; border: 1px solid #2b2b2b; outline: 1px solid #7a7a7a; position: relative; margin-right: 5px; }
.track em { position: absolute; left: -4px; top: 6px; border: 5px solid transparent; border-top: 0; border-bottom: 7px solid #aaa; }
.tr-r { background: linear-gradient(90deg, #000, #f00); }
.tr-g { background: linear-gradient(90deg, #000, #0f0); }
.tr-b { background: linear-gradient(90deg, #000, #00f); }
.cval { width: 32px; height: 17px; background: #3a3a3a; border: 1px solid #2e2e2e; box-shadow: 0 1px 0 #666; padding-left: 4px; line-height: 15px; font-size: 10px; color: #eee; }
.spectrum { width: 252px; height: 16px; margin: 8px 0 0 -1px; border: 1px solid #2e2e2e; position: relative; flex: none; background: linear-gradient(rgba(255,255,255,.75) 0, rgba(255,255,255,0) 38%, rgba(0,0,0,0) 55%, #000 100%), linear-gradient(90deg, #f00 0, #ff0 17%, #0f0 33%, #0ff 50%, #00f 68%, #f0f 85%, #f00 97%); }
.spectrum span { position: absolute; right: 0; top: 0; width: 8px; height: 14px; background: linear-gradient(#fff 50%, #000 50%); }

.styles { margin-top: 1px; flex: none; }
.styles .ptabs { height: 20px; line-height: 20px; }
.styles-body { height: 119px; display: flex; background: #484848; }
.sgrid { width: 256px; display: grid; grid-template-columns: repeat(8, 32px); grid-auto-rows: 32px; flex: none; }
.sgrid span { background: #535353; border-right: 1px solid #404040; border-bottom: 1px solid #404040; display: flex; align-items: center; justify-content: center; }
.sgrid i { width: 15px; height: 15px; display: block; }
.sside { flex: 1; background: #424242; border-left: 1px solid #3a3a3a; }
.s1 { background: linear-gradient(150deg, #2a6a28 0%, #0e5a22 25%, #7fcf6a 45%, #0c4a1c 62%, #8fbb50 100%); }
.s2 { background: repeating-linear-gradient(3deg, #c9b48a 0 1px, #a89668 1px 3px, #bca880 3px 4px); }
.s3 { background: radial-gradient(circle at 30% 40%, #eee 0 .8px, transparent 1.500px) 0 0 / 5px 4px, radial-gradient(circle at 70% 70%, #ddd 0 .8px, transparent 1.500px) 1px 2px / 7px 6px, #111; }
.s4 { background: linear-gradient(40deg, #8e3a4e, #d06a86 45%, #b05044 60%, #92303c); }
.s5 { background: repeating-linear-gradient(#e8203a 0 2px, #8a1248 2px 3px, #d6405a 3px 5px, #5a2a7a 5px 6px); }
.s6 { background: linear-gradient(135deg, #cc6e40, #b04f26); box-shadow: 1px 1px 0 #333; }
.s7 { background: repeating-linear-gradient(100deg, #4e56a8 0 2px, #666ebc 2px 4px); }
.s8 { background: radial-gradient(circle at 40% 40%, #222 0 .9px, transparent 1.700px) 0 0 / 4px 5px, radial-gradient(circle at 60% 60%, #333 0 .8px, transparent 1.500px) 2px 1px / 6px 4px, #e0dcd6; }
.s9 { background: radial-gradient(circle, #3a3a3a 0 .8px, transparent 1.200px) 0 0 / 5px 4px, #0c0c0c; }
.s10 { background: linear-gradient(160deg, #0aa 0 25%, #211 35%, #e22 50%, #fd2 70%, #113 100%); }
.s11 { background: repeating-linear-gradient(92deg, #c7a36c 0 2px, #b38e58 2px 4px); }
.s12 { background: #d3c6b5; }
.s13 { background: linear-gradient(#3a1e28, #c48a98 50%, #e6dce0 65%, #944f64); }
.s14 { background: radial-gradient(circle at 30% 40%, #444 0 .8px, transparent 1.600px) 0 0 / 5px 4px, linear-gradient(135deg, #eee, #888 50%, #ddd); }
.s15 { background: radial-gradient(circle, #7a7a10 0 35%, #f0d010 55%, #c8a000 100%); }
.s16 { background: linear-gradient(135deg, #c86a50, #d08850 60%, #7a8040); }
.sfoot { height: 18px; background: #535353; border-top: 1px solid #3a3a3a; display: flex; justify-content: flex-end; gap: 16px; padding: 2px 26px 0 0; }

.layers { margin-top: 3px; flex: 1; min-height: 0; display: flex; flex-direction: column; background: #535353; font-size: 10px; color: #ddd; }
.lrow { flex: none; display: flex; align-items: center; border-bottom: 1px solid #3a3a3a; padding-left: 4px; box-shadow: 0 1px 0 #5e5e5e; }
.filter { height: 28px; }
.kind { width: 63px; gap: 2px; padding-left: 4px; font-size: 11px; }
.fi { margin-left: 12px; flex: none; }
.f-first { margin-left: 11px; }
.f-second { margin-left: 11px; }
.f-last { margin-left: 13px; }
.ftext { font-family: "Liberation Serif", serif; font-size: 15px; line-height: 14px; color: #ccc; width: 12px; text-align: center; }
.toggle { width: 9px; height: 18px; margin-left: 13px; background: linear-gradient(#888 50%, #333 50%); border: 1px solid #2e2e2e; }
.blend { height: 28px; padding-top: 1px; }
.normal { width: 110px; font-size: 10px; padding-left: 6px; }
.op { margin-left: 6px; }
.pinput { width: 50px; height: 15px; display: flex; margin-left: 3px; border: 1px solid #2e2e2e; }
.pinput b { width: 33px; background: #3a3a3a; font-weight: 400; font-size: 10px; text-align: center; line-height: 13px; color: #eee; }
.pinput u { flex: 1; background: #666; position: relative; }
.pinput u::after { content: ""; position: absolute; left: 5px; top: 5px; border: 3px solid transparent; border-top: 4px solid #ddd; }
.lock { height: 30px; padding-right: 59px; }
.lock .lbl:first-child { margin-left: 1px; }
.lk { flex: none; margin-left: 7px; }
.lk1 { margin-left: 6px; }
.lk4 { margin-left: 10px; }
.fl { margin-left: auto; }
.llist { flex: 1; min-height: 0; display: flex; flex-direction: column; background: #454545; }
.layer { height: 39px; flex: none; width: 256px; display: flex; align-items: center; background: #4a4a4a; border-bottom: 1px solid #353535; font-size: 10px; color: #e6e6e6; }
.l1 { height: 41px; background: #6a7a94; }
.lvis { width: 32px; height: 100%; flex: none; border-right: 1px solid #3a3a3a; display: flex; align-items: center; justify-content: center; }
.vbox { width: 12px; height: 12px; border: 1px solid #2e2e2e; background: #4c4c4c; }
.lth { width: 32px; height: 32px; margin-left: 2px; flex: none; position: relative; }
.lth svg { display: block; }
.lth.sel::after { content: ""; position: absolute; left: -2px; top: -2px; right: -2px; bottom: -2px; background: linear-gradient(#fff, #fff) 0 0 / 10px 1.500px no-repeat, linear-gradient(#fff, #fff) 100% 0 / 10px 1.500px no-repeat, linear-gradient(#fff, #fff) 0 100% / 10px 1.500px no-repeat, linear-gradient(#fff, #fff) 100% 100% / 10px 1.500px no-repeat, linear-gradient(#fff, #fff) 0 0 / 1.500px 10px no-repeat, linear-gradient(#fff, #fff) 100% 0 / 1.500px 10px no-repeat, linear-gradient(#fff, #fff) 0 100% / 1.500px 10px no-repeat, linear-gradient(#fff, #fff) 100% 100% / 1.500px 10px no-repeat; }
.lname { margin-left: 8px; padding-top: 2px; }
.lempty { flex: 1; width: 256px; background: #454545; }
.lfoot { height: 3px; flex: none; background: #535353; border-top: 1px solid #2e2e2e; }
```
